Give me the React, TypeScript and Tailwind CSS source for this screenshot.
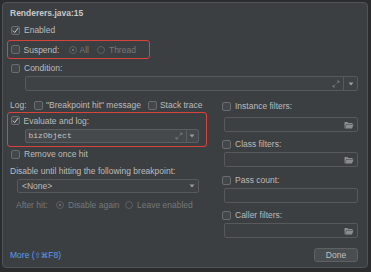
import React from "react";

function Check({ checked = false }: { checked?: boolean }) {
  return (
    <div className="w-[9px] h-[9px] shrink-0 rounded-[2px] border border-[#6a6d70] bg-[#43474a] flex items-center justify-center">
      {checked && (
        <svg width="7" height="7" viewBox="0 0 7 7">
          <path d="M0.8 3.6 L2.7 5.5 L6.2 1" stroke="#cfcfcf" strokeWidth="1" fill="none" />
        </svg>
      )}
    </div>
  );
}

function Radio({ on = false }: { on?: boolean }) {
  return (
    <div className="w-[8px] h-[8px] shrink-0 rounded-full border border-[#5d6062] flex items-center justify-center">
      {on && <div className="w-[2px] h-[2px] rounded-full bg-[#7d8082]" />}
    </div>
  );
}

function Expand() {
  return (
    <svg width="8" height="8" viewBox="0 0 8 8" className="shrink-0">
      <path d="M4.6 3.4 L7 1 M5 1 H7 V3 M3.4 4.6 L1 7 M1 5 V7 H3" stroke="#75797b" strokeWidth="0.9" fill="none" />
    </svg>
  );
}

function Tri() {
  return (
    <svg width="6" height="4" viewBox="0 0 6 4">
      <path d="M0.5 0.5 H5.5 L3 3.5 Z" fill="#9b9ea0" />
    </svg>
  );
}

function Folder() {
  return (
    <svg width="10" height="8" viewBox="0 0 10 8" className="shrink-0">
      <path d="M0.5 1 H3.5 L4.3 2 H8.5 V3 H2.3 L0.5 7.5 Z" fill="#8a8d90" />
      <path d="M2.6 3.6 H9.6 L8 7.5 H0.9 Z" fill="#8a8d90" />
    </svg>
  );
}

function FilterField() {
  return (
    <div className="ml-[2px] w-[134px] h-[15px] border border-[#57595b] rounded-[2px] bg-[#3d4042] flex items-center justify-end pr-[3px]">
      <Folder />
    </div>
  );
}

export default function App() {
  const dim = "text-[#75787a]";
  return (
    <div className="w-[371px] h-[272px] bg-[#2a2c2e] overflow-hidden pt-[2px] pl-[2px] font-['Liberation_Sans',Arial,sans-serif] text-[8.5px] leading-[12px] text-[#bbbbbb]">
      <div className="w-[366px] h-[266px] bg-[#3c3f41] border border-[#515456] rounded-[4px] flex flex-col pl-[7px] pr-[9px]">
        <div className="pt-[3px] h-[17px] flex items-end">
          <div className="h-[14px] leading-[14px] font-bold text-[8.5px] text-[#c8c8c8]">Renderers.java:15</div>
        </div>

        <div className="mt-[4px] h-[12px] flex items-center pl-[1px]">
          <Check checked />
          <span className="ml-[4px]">Enabled</span>
        </div>

        <div className="mt-[4px] h-[19px] w-[143px] ml-[-3px] border-[1.5px] border-[#d8433c] rounded-[3px] flex items-center pl-[2.5px]">
          <Check />
          <span className="ml-[4px] w-[40px]">Suspend:</span>
          <div className="ml-[5px] flex items-center">
            <Radio on />
            <span className={`ml-[3px] ${dim}`}>All</span>
          </div>
          <div className="ml-[8px] flex items-center">
            <Radio />
            <span className={`ml-[4px] ${dim}`}>Thread</span>
          </div>
        </div>

        <div className="mt-[3px] h-[12px] flex items-center pl-[1px]">
          <Check />
          <span className="ml-[4px]">Condition:</span>
        </div>

        <div className="mt-[2px] ml-[15px] h-[15px] border border-[#57595b] rounded-[2px] bg-[#3f4244] flex">
          <div className="flex-1 flex items-center justify-end pr-[3px]">
            <Expand />
          </div>
          <div className="w-[14px] border-l border-[#57595b] flex items-center justify-center">
            <Tri />
          </div>
        </div>

        <div className="mt-[8px] flex">
          <div className="w-[212px] flex flex-col">
            <div className="h-[12px] flex items-center">
              <span className="w-[24px]">Log:</span>
              <Check />
              <span className="ml-[3px]">"Breakpoint hit" message</span>
              <div className="ml-[7px]">
                <Check />
              </div>
              <span className="ml-[3px]">Stack trace</span>
            </div>

            <div className="mt-[1px] h-[35px] w-[200px] ml-[-3px] border-[1.5px] border-[#d8433c] rounded-[3px] flex flex-col pl-[2.5px]">
              <div className="mt-[1.5px] h-[12px] flex items-center">
                <Check checked />
                <span className="ml-[4px]">Evaluate and log:</span>
              </div>
              <div className="mt-[2px] ml-[14px] w-[174px] h-[14px] border border-[#5b5e60] rounded-[2px] bg-[#45494b] flex">
                <div className="flex-1 flex items-center pl-[3px] pr-[3px]">
                  <span className="flex-1 font-['Liberation_Mono',monospace] text-[8px] text-[#c4c4c4]">bizObject</span>
                  <Expand />
                </div>
                <div className="w-[12px] border-l border-[#5b5e60] flex items-center justify-center">
                  <Tri />
                </div>
              </div>
            </div>

            <div className="mt-[1px] h-[12px] flex items-center pl-[1px]">
              <Check />
              <span className="ml-[4px]">Remove once hit</span>
            </div>

            <div className="mt-[5px] h-[12px] flex items-center">Disable until hitting the following breakpoint:</div>

            <div className="mt-[2px] ml-[7px] w-[182px] h-[14px] border border-[#57595b] rounded-[2px] bg-[#3f4244] flex items-center pl-[4px] pr-[3px]">
              <span className="flex-1">&lt;None&gt;</span>
              <Tri />
            </div>

            <div className={`mt-[6px] h-[12px] flex items-center pl-[6px] ${dim}`}>
              <span className="w-[36px]">After hit:</span>
              <div className="ml-[4px] flex items-center">
                <Radio on />
                <span className="ml-[4px] w-[54px]">Disable again</span>
              </div>
              <div className="ml-[3px] flex items-center">
                <Radio />
                <span className="ml-[4px]">Leave enabled</span>
              </div>
            </div>
          </div>

          <div className="flex-1 flex flex-col">
            <div className="mt-[1px] h-[12px] flex items-center">
              <Check />
              <span className="ml-[4px]">Instance filters:</span>
            </div>
            <div className="mt-[5px]">
              <FilterField />
            </div>
            <div className="mt-[6px] h-[12px] flex items-center">
              <Check />
              <span className="ml-[4px]">Class filters:</span>
            </div>
            <div className="mt-[2px]">
              <FilterField />
            </div>
            <div className="mt-[7px] h-[12px] flex items-center">
              <Check />
              <span className="ml-[4px]">Pass count:</span>
            </div>
            <div className="mt-[2px] ml-[2px] w-[134px] h-[15px] border border-[#57595b] rounded-[2px] bg-[#3d4042]" />
            <div className="mt-[6px] h-[12px] flex items-center">
              <Check />
              <span className="ml-[4px]">Caller filters:</span>
            </div>
            <div className="mt-[2px]">
              <FilterField />
            </div>
          </div>
        </div>

        <div className="mt-auto mb-[5px] h-[14px] flex items-center justify-between">
          <span className="text-[#5b9cf0]">
            More (<span className="font-['DejaVu_Sans',sans-serif] text-[7.5px]">⇧⌘</span>F8)
          </span>
          <div className="w-[44px] h-[14px] rounded-[3px] border border-[#5e6163] bg-[#4a4e50] flex items-center justify-center text-[#c0c0c0]">
            Done
          </div>
        </div>
      </div>
    </div>
  );
}
